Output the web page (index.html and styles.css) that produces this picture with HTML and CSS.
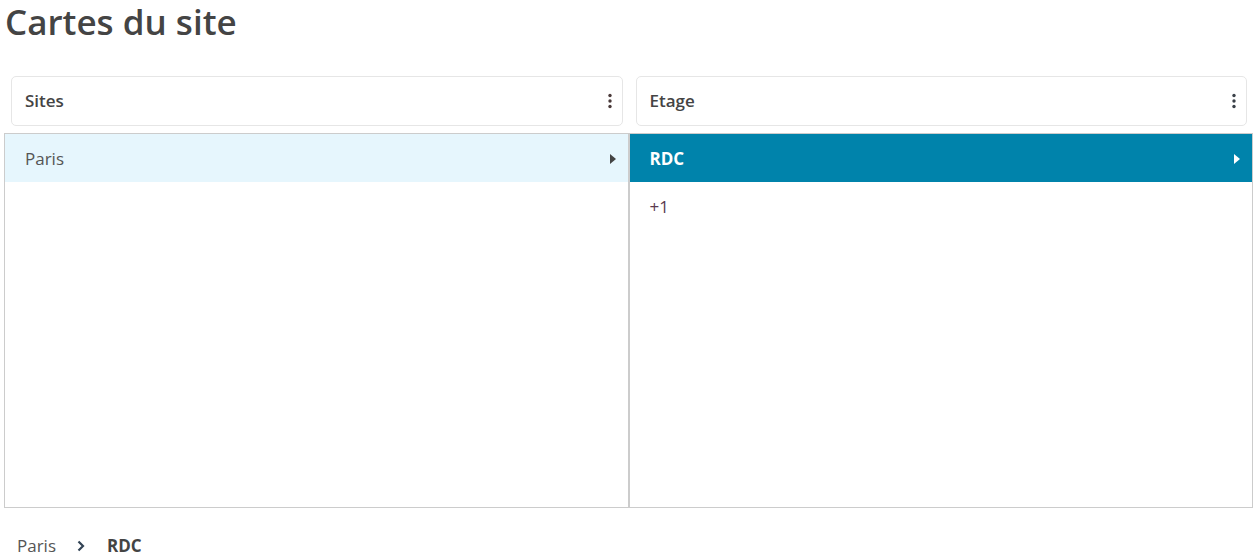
FILE: index.html
```html
<!DOCTYPE html>
<html lang="fr">
<head>
<meta charset="utf-8">
<title>Cartes du site</title>
<link rel="stylesheet" href="styles.css">
</head>
<body>
<h1 class="title">Cartes du site</h1>
<div class="headers">
  <div class="col-head">
    <div class="card">
      <span class="card-label">Sites</span>
      <svg class="kebab" width="4" height="16" viewBox="0 0 4 16"><circle cx="2" cy="2.5" r="1.7"/><circle cx="2" cy="8" r="1.7"/><circle cx="2" cy="13.5" r="1.7"/></svg>
    </div>
  </div>
  <div class="col-head">
    <div class="card">
      <span class="card-label">Etage</span>
      <svg class="kebab" width="4" height="16" viewBox="0 0 4 16"><circle cx="2" cy="2.5" r="1.7"/><circle cx="2" cy="8" r="1.7"/><circle cx="2" cy="13.5" r="1.7"/></svg>
    </div>
  </div>
</div>
<div class="panel">
  <div class="col">
    <div class="row row-hl">
      <span>Paris</span>
      <svg class="caret" width="6" height="10" viewBox="0 0 6 10"><path d="M0 0 L6 5 L0 10 Z"/></svg>
    </div>
  </div>
  <div class="col">
    <div class="row row-sel">
      <span>RDC</span>
      <svg class="caret" width="6" height="10" viewBox="0 0 6 10"><path d="M0 0 L6 5 L0 10 Z"/></svg>
    </div>
    <div class="row row-plain">
      <span>+1</span>
    </div>
  </div>
</div>
<nav class="crumbs">
  <span class="crumb">Paris</span>
  <svg class="chev" width="8" height="12" viewBox="0 0 8 12"><path d="M1.5 1.5 L6 6 L1.5 10.5" fill="none" stroke-width="2.2"/></svg>
  <span class="crumb crumb-current">RDC</span>
</nav>
</body>
</html>
```
FILE: styles.css
```css
* { box-sizing: border-box; }
html, body {
  margin: 0;
  padding: 0;
  background: #ffffff;
  font-family: "Open Sans", "Noto Sans", sans-serif;
  color: #555555;
}
body {
  width: 1256px;
  height: 558px;
  overflow: hidden;
}
.title {
  margin: 0;
  padding: 0 0 0 5px;
  height: 44px;
  line-height: 44px;
  font-size: 35px;
  font-weight: 600;
  color: #444444;
}
.headers {
  display: flex;
  margin: 32px 3px 0 4px;
}
.col-head {
  flex: 1;
  padding: 0 6px 0 7px;
}
.card {
  height: 50px;
  border: 1px solid #e6e6e6;
  border-radius: 5px;
  display: flex;
  align-items: center;
  justify-content: space-between;
  padding: 0 10px 2px 13px;
}
.card-label {
  font-size: 17px;
  font-weight: 600;
  color: #444444;
}
.kebab { fill: #4a3a3a; margin-top: 2px; }
.col-head:last-child .kebab { fill: #3a4048; }
.panel {
  display: flex;
  margin: 7px 3px 0 4px;
  height: 375px;
}
.col {
  flex: 1;
  border: 1px solid #cccccc;
}
.row {
  height: 48px;
  display: flex;
  align-items: center;
  justify-content: space-between;
  padding: 1px 12px 0 20px;
  font-size: 17px;
}
.row-hl {
  background: #e6f6fd;
  color: #555555;
}
.row-hl .caret { fill: #444444; }
.row-sel {
  background: #0083ab;
  color: #ffffff;
  font-weight: 700;
}
.row-sel .caret { fill: #ffffff; }
.row-plain {
  color: #5a3a50;
}
.crumbs {
  display: flex;
  align-items: center;
  margin: 27px 0 0 17px;
  font-size: 17px;
  line-height: 22px;
}
.crumb { color: #555555; }
.chev {
  stroke: #334455;
  margin: 0 22px 0 21px;
}
.crumb-current {
  font-weight: 700;
  color: #444444;
}
```
